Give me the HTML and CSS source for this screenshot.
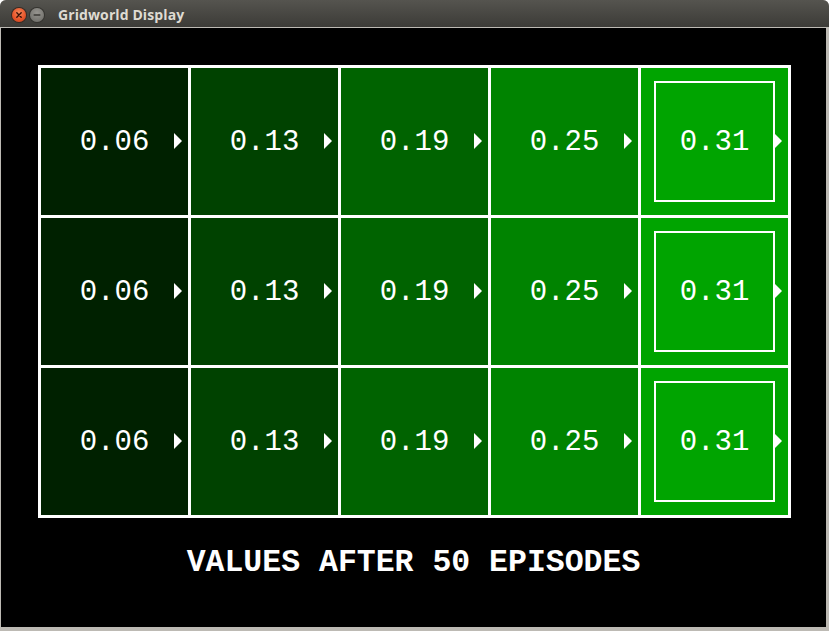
FILE: index.html
```html
<!DOCTYPE html>
<html>
<head>
<meta charset="utf-8">
<title>Gridworld Display</title>
<link rel="stylesheet" href="styles.css">
</head>
<body>
<div class="window">
  <div class="titlebar">
    <div class="controls">
      <span class="btn btn-close"><svg width="14" height="14" viewBox="0 0 14 14"><path d="M4.8 4.8 L9.2 9.2 M9.2 4.8 L4.8 9.2" stroke="#3a1208" stroke-width="1.4" stroke-linecap="round"/></svg></span>
      <span class="btn btn-min"><svg width="14" height="14" viewBox="0 0 14 14"><path d="M4.2 7 H9.8" stroke="#3b3a36" stroke-width="1.5" stroke-linecap="round"/></svg></span>
    </div>
    <div class="title">Gridworld Display</div>
  </div>
  <div class="content">
    <div class="grid">
      <div class="cell c1"><span class="val">0.06</span><span class="arrow"></span></div>
      <div class="cell c2"><span class="val">0.13</span><span class="arrow"></span></div>
      <div class="cell c3"><span class="val">0.19</span><span class="arrow"></span></div>
      <div class="cell c4"><span class="val">0.25</span><span class="arrow"></span></div>
      <div class="cell c5"><div class="terminal"><span class="val">0.31</span></div><span class="arrow"></span></div>

      <div class="cell c1"><span class="val">0.06</span><span class="arrow"></span></div>
      <div class="cell c2"><span class="val">0.13</span><span class="arrow"></span></div>
      <div class="cell c3"><span class="val">0.19</span><span class="arrow"></span></div>
      <div class="cell c4"><span class="val">0.25</span><span class="arrow"></span></div>
      <div class="cell c5"><div class="terminal"><span class="val">0.31</span></div><span class="arrow"></span></div>

      <div class="cell c1"><span class="val">0.06</span><span class="arrow"></span></div>
      <div class="cell c2"><span class="val">0.13</span><span class="arrow"></span></div>
      <div class="cell c3"><span class="val">0.19</span><span class="arrow"></span></div>
      <div class="cell c4"><span class="val">0.25</span><span class="arrow"></span></div>
      <div class="cell c5"><div class="terminal"><span class="val">0.31</span></div><span class="arrow"></span></div>
    </div>
    <div class="caption">VALUES AFTER 50 EPISODES</div>
  </div>
</div>
</body>
</html>
```
FILE: styles.css
```css
html, body {
  margin: 0;
  padding: 0;
  background: #ffffff;
}

.window {
  width: 829px;
  height: 631px;
  background: #bdbab4;
  border-radius: 6px 6px 0 0;
  overflow: hidden;
  display: flex;
  flex-direction: column;
}

.titlebar {
  height: 27px;
  flex: none;
  background: linear-gradient(#55544f, #3c3b37);
  display: flex;
  align-items: center;
  padding-left: 12px;
  box-sizing: border-box;
}

.controls {
  display: flex;
  gap: 4px;
  margin-top: 2px;
}

.btn {
  width: 14px;
  height: 14px;
  border-radius: 50%;
  display: block;
}

.btn svg {
  display: block;
}

.btn-close {
  background: radial-gradient(circle at 50% 35%, #f58a5c 0%, #e9552a 55%, #c53f1a 100%);
  box-shadow: 0 0 0 1px #3a2a22;
}

.btn-min {
  background: radial-gradient(circle at 50% 35%, #96948f 0%, #7b7a75 60%, #65645f 100%);
  box-shadow: 0 0 0 1px #34332f;
}

.title {
  margin-left: 14px;
  font-family: "Open Sans", "Noto Sans", sans-serif;
  font-weight: 700;
  font-size: 14px;
  color: #dfdbd2;
  letter-spacing: 0.1px;
  margin-top: 1px;
}

.content {
  background: #000000;
  margin: 1px 3px 4px 1px;
  flex: 1;
  padding: 37px 0 0 37px;
  box-sizing: border-box;
}

.grid {
  display: grid;
  grid-template-columns: repeat(5, 147px);
  grid-template-rows: repeat(3, 147px);
  gap: 3px;
  padding: 3px;
  background: #ffffff;
  width: max-content;
}

.cell {
  position: relative;
  display: flex;
  align-items: center;
  justify-content: center;
}

.c1 { background: #002100; }
.c2 { background: #004200; }
.c3 { background: #006300; }
.c4 { background: #008300; }
.c5 { background: #00a400; }

.val {
  font-family: "Liberation Mono", monospace;
  font-size: 29px;
  line-height: 1;
  color: #ffffff;
  margin-top: 1px;
}

.terminal {
  width: 121px;
  height: 121px;
  box-sizing: border-box;
  border: 2px solid #ffffff;
  display: flex;
  align-items: center;
  justify-content: center;
}

.arrow {
  position: absolute;
  right: 6px;
  top: calc(50% - 8.5px);
  width: 0;
  height: 0;
  border-left: 8px solid #ffffff;
  border-top: 8px solid transparent;
  border-bottom: 8px solid transparent;
}

.caption {
  margin-top: 29px;
  margin-left: -37px;
  text-align: center;
  font-family: "Liberation Mono", monospace;
  font-weight: 700;
  font-size: 31.5px;
  line-height: 1;
  color: #ffffff;
}
```
